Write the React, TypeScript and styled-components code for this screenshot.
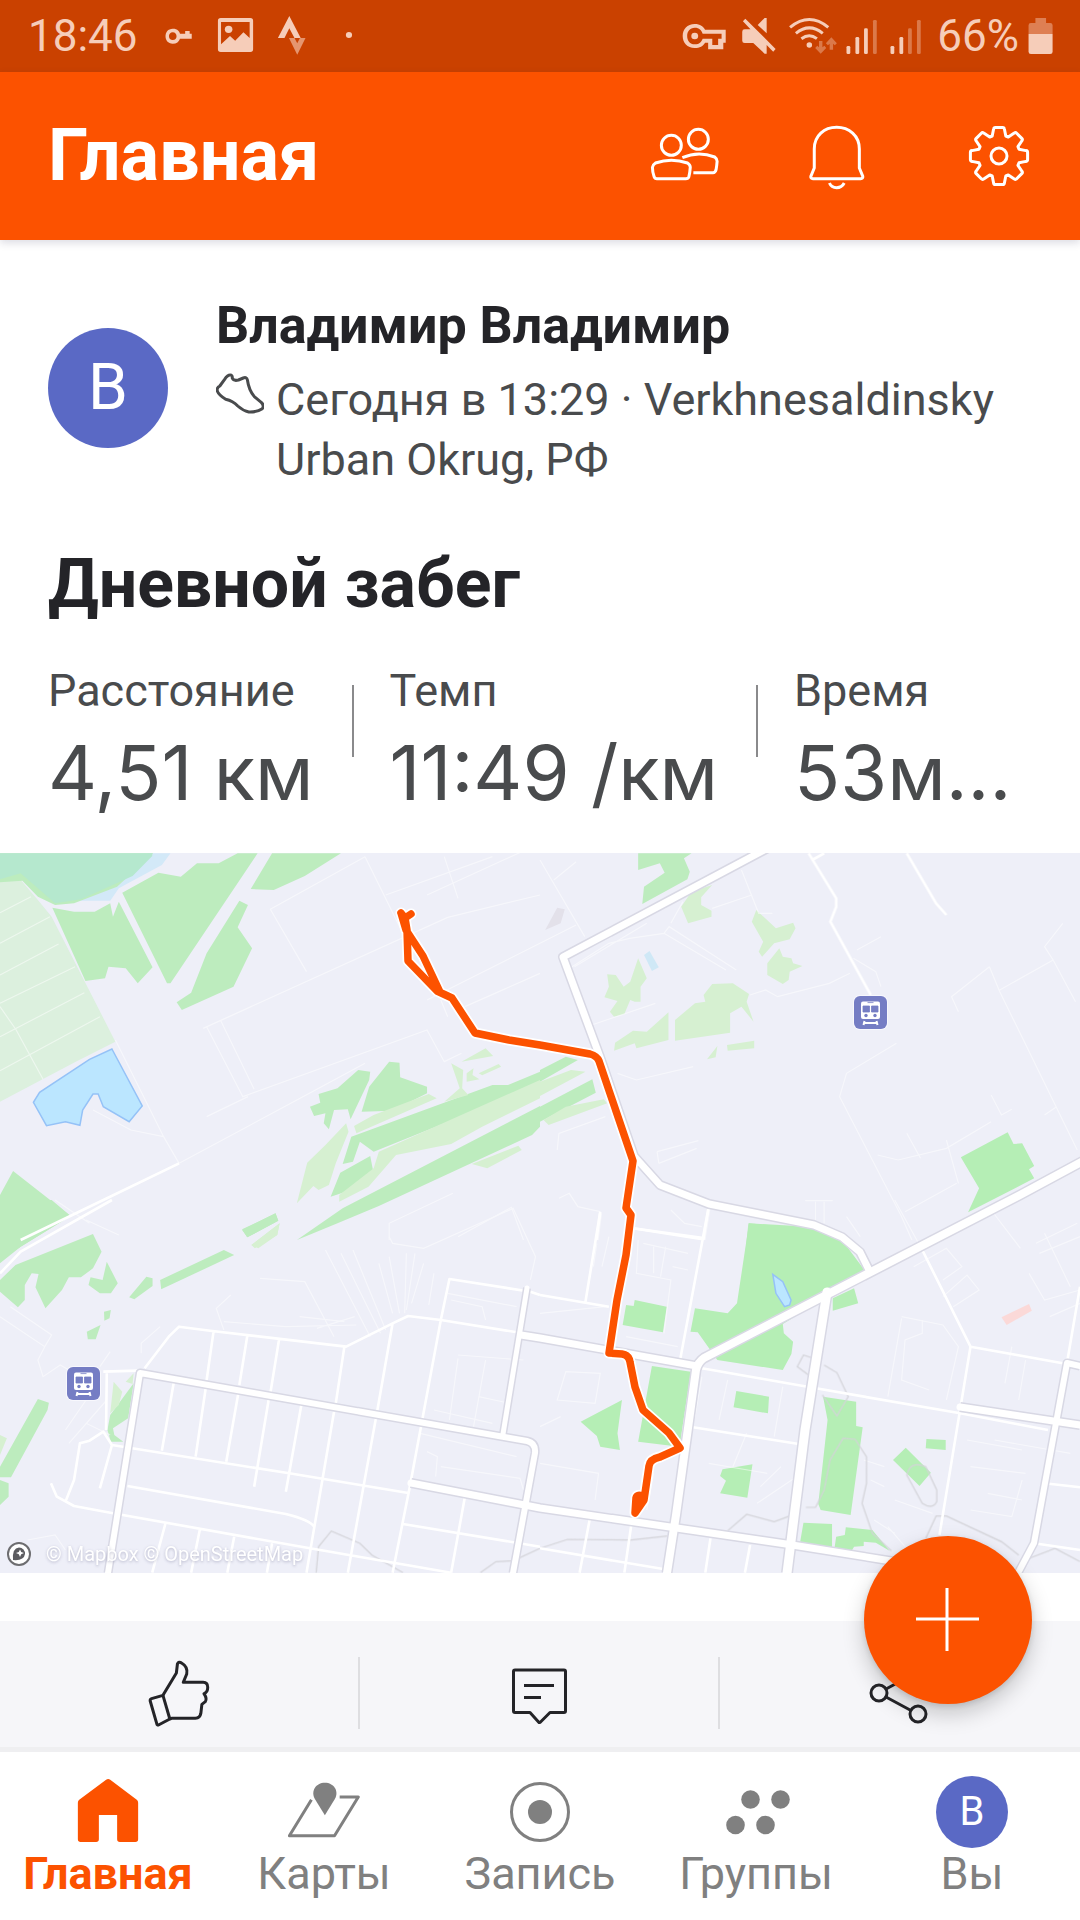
import React from 'react';
import styled, { createGlobalStyle } from 'styled-components';

const color = {
  brand: '#fc5200',
  brandDark: '#ca4100',
  ink: '#242428',
  text: '#494b4d',
  muted: '#808080',
  tint: '#f6cdb9',
  avatar: '#5a69c5',
  surface: '#f6f6f9',
};

const GlobalStyle = createGlobalStyle`
  *, *::before, *::after { box-sizing: border-box; }
  body { margin: 0; background: #fff; font-family: Roboto, "Noto Sans", sans-serif; color: ${color.ink}; }
  svg { display: block; }
  h1, h2, p, dl, dt, dd { margin: 0; }
`;

const Screen = styled.div`
  position: relative;
  display: flex;
  flex-direction: column;
  min-height: 100vh;
  background: #fff;
`;

const StatusBar = styled.div`
  display: flex;
  justify-content: space-between;
  align-items: center;
  height: 72px;
  padding: 0 25px 0 28px;
  background: ${color.brandDark};
  color: ${color.tint};
  font-size: 44px;
  line-height: 72px;
`;

const StatusGroup = styled.div`
  display: flex;
  align-items: center;
`;

const Clock = styled.time`
  padding-right: 2px;
`;

const BatteryLevel = styled.span`
  padding: 0 2px 0 8px;
`;

const Header = styled.header`
  position: relative;
  display: flex;
  justify-content: space-between;
  align-items: center;
  height: 168px;
  padding: 0 33px 0 48px;
  background: ${color.brand};
  color: #fff;
  box-shadow: 0 3px 8px rgba(40, 40, 80, 0.16);
`;

const PageTitle = styled.h1`
  font-size: 72px;
  line-height: 84px;
  font-weight: 700;
`;

const HeaderActions = styled.div`
  display: flex;
  gap: 60px;
`;

const IconButton = styled.button`
  display: flex;
  align-items: center;
  justify-content: center;
  padding: 0;
  border: 0;
  background: none;
  color: inherit;
  cursor: pointer;
`;

const Main = styled.main`
  flex: 1;
  display: flex;
  flex-direction: column;
`;

const Activity = styled.article`
  display: flex;
  flex-direction: column;
`;

const Summary = styled.div`
  display: flex;
  flex-direction: column;
  padding: 56px 48px 36px;
`;

const Athlete = styled.div`
  display: flex;
  align-items: flex-start;
  gap: 48px;
`;

const Avatar = styled.span<{ $size: number; $font: number; $top?: number }>`
  flex: none;
  display: flex;
  align-items: center;
  justify-content: center;
  width: ${(p) => p.$size}px;
  height: ${(p) => p.$size}px;
  margin-top: ${(p) => p.$top ?? 0}px;
  border-radius: 50%;
  background: ${color.avatar};
  color: #fff;
  font-size: ${(p) => p.$font}px;
  line-height: 1;
`;

const AthleteInfo = styled.div`
  flex: 1;
  min-width: 0;
  display: flex;
  flex-direction: column;
  gap: 14px;
`;

const AthleteName = styled.p`
  font-size: 52px;
  line-height: 60px;
  font-weight: 700;
`;

const Meta = styled.div`
  display: flex;
  align-items: flex-start;
  gap: 12px;
  color: ${color.text};
  font-size: 45px;
  line-height: 60px;
`;

const ActivityTitle = styled.h2`
  margin-top: 52px;
  font-size: 68px;
  line-height: 84px;
  font-weight: 700;
`;

const Stats = styled.dl`
  display: flex;
  margin-top: 39px;
  color: ${color.text};
`;

const Stat = styled.div`
  position: relative;
  display: flex;
  flex-direction: column;
  gap: 10px;
  white-space: nowrap;

  & + & {
    margin-left: 38px;
    padding-left: 38px;
  }

  & + &::before {
    content: '';
    position: absolute;
    left: 0;
    top: 20px;
    width: 2px;
    height: 72px;
    background: #8a8a8c;
  }
`;

const StatLabel = styled.dt`
  font-size: 45px;
  line-height: 52px;
`;

const StatValue = styled.dd`
  font-family: Inter, Roboto, sans-serif;
  font-size: 76px;
  line-height: 90px;
`;

const MapFrame = styled.div`
  position: relative;
  background: #eeeff8;

  & > svg {
    width: 100%;
    height: auto;
  }
`;

const Attribution = styled.div`
  position: absolute;
  left: 6px;
  bottom: 6px;
  display: flex;
  align-items: center;
  gap: 14px;
  font-size: 20px;
  line-height: 26px;

  a {
    color: #fff;
    text-decoration: none;
    text-shadow: 0 1px 3px rgba(90, 90, 130, 0.4);
  }
`;

const ActionBar = styled.div`
  display: grid;
  grid-template-columns: repeat(3, 1fr);
  margin-top: 48px;
  padding: 36px 0 18px;
  background: ${color.surface};
  color: ${color.ink};

  & > * + * {
    border-left: 2px solid #dedee1;
    margin-left: -2px;
  }
`;

const Nav = styled.nav`
  display: grid;
  grid-template-columns: repeat(5, 1fr);
  padding: 24px 0 20px;
  border-top: 5px solid #efeff1;
  background: #fff;
`;

const NavLink = styled.a<{ $active?: boolean }>`
  display: flex;
  flex-direction: column;
  align-items: center;
  color: ${(p) => (p.$active ? color.brand : color.muted)};
  font-size: 45px;
  line-height: 52px;
  font-weight: ${(p) => (p.$active ? 700 : 400)};
  text-decoration: none;
`;

const Fab = styled.button`
  position: absolute;
  right: 48px;
  bottom: 216px;
  display: flex;
  align-items: center;
  justify-content: center;
  width: 168px;
  height: 168px;
  padding: 0;
  border: 0;
  border-radius: 50%;
  background: ${color.brand};
  color: #fff;
  box-shadow: 0 10px 22px rgba(0, 0, 0, 0.2), 0 2px 6px rgba(0, 0, 0, 0.12);
  cursor: pointer;
`;

type GlyphProps = {
  w: number;
  h: number;
  box: string;
  stroke?: number;
  children: React.ReactNode;
};

/* Icon canvas: children inherit the current colour; stroke widths stay in screen pixels. */
const GlyphSvg = styled.svg<{ $stroke?: number }>`
  flex: none;

  & * {
    vector-effect: non-scaling-stroke;
    stroke-linejoin: round;
  }

  ${(p) => (p.$stroke ? `stroke: currentColor; stroke-width: ${p.$stroke}px; fill: none;` : 'fill: currentColor;')}
`;

function Glyph({ w, h, box, stroke, children }: GlyphProps) {
  return (
    <GlyphSvg width={w} height={h} viewBox={box} preserveAspectRatio="none" $stroke={stroke} aria-hidden="true">
      {children}
    </GlyphSvg>
  );
}

function gearPath() {
  const pts: string[] = [];
  for (let i = 0; i < 8; i++) {
    const a = (i * Math.PI) / 4;
    const at = (r: number, t: number) =>
      `${(48 + r * Math.sin(a) + t * Math.cos(a)).toFixed(2)} ${(48 - r * Math.cos(a) + t * Math.sin(a)).toFixed(2)}`;
    pts.push(`${i ? 'L' : 'M'}${at(20, -6.8)}L${at(27, -5.4)}Q${at(28.6, -5.2)} ${at(28.6, -3.6)}L${at(28.6, 3.6)}Q${at(28.6, 5.2)} ${at(27, 5.4)}L${at(20, 6.8)}`);
  }
  return pts.join('') + 'Z';
}

/* The map is drawn as four tiles; each tile has its own coordinate grid. */
const tiles = {
  nw: 'translate(0 840) scale(.34439 .33333)',
  ne: 'translate(540 840) scale(.34439 .33333)',
  sw: 'translate(0 1200) scale(.34439 .33333)',
  se: 'translate(540 1200) scale(.34439 .33333)',
};
type TileId = keyof typeof tiles;

const ids = Object.keys(tiles) as TileId[];

const pale: Partial<Record<TileId, string>> = {
  nw: 'M0 120H60L110 180L150 230L335 605L220 665L0 785Z',
};

const lightGreen: Partial<Record<TileId, string>> = {
  nw: 'M1005 850L1012 875L975 970L955 1035L925 1050L910 1038L862 1090L892 968L945 915ZM1028 858L1085 825L1245 762L1268 775L1035 880ZM1100 935L1568 720V775L1400 860L1310 912L1150 945L1070 1040L985 1085V1065L1085 985ZM1310 670L1345 690L1342 745L1360 765L1290 785L1335 745ZM1340 665L1410 625L1432 648ZM1355 700L1375 685L1372 705L1392 718L1355 725ZM1390 700L1448 672L1455 680L1400 706ZM1370 972L1505 917L1515 930L1415 985ZM730 1215L812 1150L805 1185L750 1225Z',
  ne: 'M500 135L468 172V195L498 212V230L430 250L410 200L440 155ZM628 210L685 265L735 248L742 265L725 298L680 310L645 350L635 335L648 305L615 245ZM695 325L705 350L730 355L735 370L762 378L725 395L722 420L705 432L660 405V370ZM285 355L310 415L292 440V485H275L262 480L245 522L215 530L203 515L225 483L187 472L200 440L195 403L220 405L243 440L262 425ZM373 517V600L280 625L275 610L215 632L218 608L270 572L310 575ZM480 485L475 465L500 432L560 430L607 462L600 485L620 545L585 500L552 520V578L392 602V540L450 490ZM515 618L510 652L485 658ZM543 615L622 602V625L545 632ZM0 725L90 690L132 695L0 768ZM10 840L75 800L185 778L195 790L25 855Z',
  sw: 'M730 135L812 70L805 105L740 145ZM330 545L355 575L345 615L320 640ZM365 545L388 520L385 552ZM0 705L20 715L0 765Z',
};

const green: Partial<Record<TileId, string>> = {
  nw: 'M0 40H445L340 140L215 190L160 195L110 170L65 122L0 127ZM355 158L460 98L525 110L572 70H635L690 40H748L495 430H485ZM790 40H990L885 108L795 150L728 147ZM152 203L215 215H275L320 190L328 230L345 185L443 382L400 430L365 385L315 380L305 415L248 423ZM695 182L720 195L690 262L732 325L678 440L528 510L513 487L555 458L600 340ZM925 762L980 745L1040 690L1075 695L1072 720L1018 838L1010 808L970 810L955 868L940 850L945 820L912 828L900 800L930 788ZM1050 815L1072 740L1130 665L1160 668L1162 712L1240 740V760L1140 812ZM1020 890L1430 735H1475L1568 695V735L1085 935L1045 905L1025 965L995 972ZM988 998L1075 948L1083 990L1035 1045L960 1070ZM862 1200L995 1105L1568 798V860L1545 885L1100 1098L980 1150ZM38 993L205 1128L60 1220L0 1260V1150L12 1115L0 1120V1065ZM703 1168L800 1120L808 1142L718 1192Z',
  ne: 'M285 40H440L418 55L435 95L428 118L297 192L302 140L362 98L348 70L285 90ZM0 690L75 650L110 660L0 725ZM0 800L152 718L162 758L0 845ZM605 1150L780 1165L860 1195L935 1300H590Z',
  sw: 'M150 0L205 48L60 140L0 190V0ZM0 240L45 195L270 102L295 155L270 205L235 232H200L180 270L132 325L103 262L112 222L92 220L72 255V300L52 322L0 275ZM310 185L342 250L322 280H290L257 255L263 232L298 240ZM375 292L425 230L443 235V258L390 298ZM465 240L650 150L680 165L468 268ZM302 335L322 330L318 355L303 362ZM252 395L292 375L278 418H255ZM703 90L800 40L808 62L718 112ZM110 597L142 608L138 630L32 832H0V800ZM0 840L25 850V890L0 915ZM388 550L372 655L328 685L332 705L358 725H322L312 690L320 645Z',
};

const park: Partial<Record<TileId, string>> = {
  ne: 'M1222 952L1358 877L1375 912L1400 910L1435 978L1420 988L1435 1015L1243 1117L1275 1045Z',
  se: 'M607 70L785 80L870 110L935 200L955 215L705 372L708 400L735 425L730 462L705 510L515 480L458 397L437 395L450 325L545 340L572 310ZM850 295L912 265L924 310L850 332ZM275 300L368 320L357 397L240 375L250 315L272 318ZM325 498L438 515L405 740L285 725ZM238 600L225 700L232 750L175 740L165 708L118 665ZM570 573L665 590L662 640L562 622ZM530 808L617 793L602 893L523 880L540 842L523 828ZM822 590L918 605V678L937 682L902 945L815 930L808 912L835 660ZM1062 743L1135 818L1102 858L1025 780ZM1122 717L1178 720V750L1120 745ZM765 968L848 972V1042L755 1028ZM888 982L965 990L1015 1052L975 1028L940 1025V1038L912 1040L905 1052L855 1045L860 1010L885 1005Z',
};

const bluish: Partial<Record<TileId, string>> = {
  ne: 'M302 345L318 333L345 382L325 393Z',
};

const lakes: Partial<Record<TileId, string>> = {
  nw: 'M325 627L413 798L375 845L300 800L285 762H270L240 810L232 856L190 845L135 857L97 787L115 757L260 658Z',
  se: 'M676 223L705 245L729 300L725 315L710 320L685 280Z',
};

const faintRoads: Partial<Record<TileId, string>> = {
  nw: 'M0 218L90 170M0 310L145 230M0 405L170 312M0 490L218 380M0 590L245 458M0 692L290 530M0 500L47 570L125 718M1060 50L1165 270M1568 10L1240 165M1060 50L785 208L890 395M600 560L705 770L1240 570L1290 665L1340 640M590 565L1300 232L1568 165M640 540L738 748M1240 480L1568 310M1350 500L1568 400M1290 50L1330 175M1280 480L1300 530M335 600L475 890L520 970M270 810L380 870L475 890M600 830L720 770M520 970L1060 670M1130 1200V1150L1315 1060M1330 1190L1485 1102L1520 1200M1120 165L1430 50',
  ne: 'M0 60L130 290M40 120L105 65M0 310L105 255M70 395L200 310L260 295L360 280L375 260L570 390M380 250L415 185M360 280L540 390M585 90L635 220H675M615 165L500 205M150 555L335 490M100 380L310 250M610 465L655 450L690 470L840 430L900 400M920 330L990 290M910 355L975 395L990 440M225 700L280 720L445 680M340 935L460 902M345 970L455 925M340 935L345 970M1035 610L890 700L870 770L1050 1130L1080 1200M1305 380L1195 470L1215 515M1305 380L1335 455L1560 930M1335 450L1490 360L1465 320L1518 250M1490 360L1555 485M1310 765L1340 825L1370 808M980 945L1040 960L1180 925L1310 845M1065 880L1105 955M1180 900L1215 1030M1465 825L1500 800M50 930L55 880L190 830M55 1075L85 1060L110 1100L175 1115M1060 1115L1210 1030M380 1110L420 1150L470 1160M800 1085V1140M825 1085V1150M770 1082H850',
  sw: 'M650 390L628 325L670 285M755 235L885 245L970 410M650 365L830 380L1035 375M870 350L1000 365M920 385L1030 350M1130 110L1140 130L1230 145L1490 25L1555 170L1540 240M945 150L1075 410M990 160L1105 400M1025 150L1120 390M1100 190L1140 340M1130 170L1160 340M1180 160L1175 340M1205 160L1180 330M1230 190L1195 310M1260 220L1245 315M1300 280L1500 320M1310 300L1400 320L1410 360M1330 475L1305 660M1410 480L1375 680M1330 465L1520 480M1260 630L1430 670M1390 590L1480 610M1280 800L1510 835L1520 870M1240 755L1270 770L1265 830M1220 700L1500 770M30 320L150 405L130 440L0 350M130 440L110 480L125 530L175 495L200 510M320 455L290 500M410 460V430L465 380M200 730L310 600M190 690L250 600M250 670L320 705M80 1020L160 1005L190 1050M250 60L345 105M160 0L260 70',
  se: 'M75 515L50 600L160 610L175 520ZM165 130L155 200M200 110L180 200M285 120L280 220L380 240L360 400M300 130L430 160M330 140V220M365 140L350 230M385 200L430 210M250 410L400 440M470 530L450 650M545 540L520 660M705 560L680 710M600 700L560 800M1050 355L1010 590M1050 350L1170 375L1215 440L1180 600M1110 360V400L1060 420L1050 540L1130 570M1085 200L1180 145L1225 200L1170 240M1170 290L1240 225L1275 270L1200 320M1310 30L1395 145M1420 220L1465 300L1568 270M1465 100L1540 260M1440 130L1560 70M1450 160L1568 110M1480 350L1568 310M1370 440L1350 550M1410 480L1390 600M1240 720L1400 750M1250 800L1410 820M1300 880L1400 900M1320 720L1540 760M0 790L170 820L160 900M330 820L310 930M940 780L1000 800M960 840L1000 860M970 960L1030 1000M1030 900L1140 940M1250 930L1370 950L1400 840M1010 980L1060 1040M0 680L60 650M0 340L190 320M640 860L700 800M490 790L660 820M630 910L745 830M890 50L930 110M1030 0L1110 150',
};

const localRoads: Partial<Record<TileId, string>> = {
  nw: 'M520 970L240 1110L60 1200',
  ne: 'M780 40L860 175V200L843 245L960 465M1065 40L1150 190L1180 225M790 60L825 40M175 1120L165 1200M490 1105L475 1200M270 1165L480 1195',
  sw: 'M325 0L60 155L0 220M420 505L490 410L520 380L610 392L1005 440L1140 370L1185 348L1280 360L1520 400M1540 275L1305 237L1280 360L1190 860L1140 1118M620 395L600 540M718 408L695 555M810 420L785 580M1000 440L975 610M1140 370L1095 635L1010 1118M505 545L470 752M598 560L568 770M692 580L657 785M780 600L738 860M875 615L830 875M970 635L890 1118M325 735L840 820L1190 880M370 858L830 942Q900 960 912 980M148 850L165 890L215 918L340 942L900 1045L1310 1118M190 905L215 840L232 730L260 722L300 695L325 735L290 865M300 515L400 512M310 520L308 690M480 972L442 1118M580 990L555 1118M680 1010L660 1118M790 1030L775 1118M1350 890L1310 1118M1170 972L1568 1040M1540 275L1568 285',
  se: 'M175 35L132 305M490 20L405 490M270 85L472 118M0 285L200 320M470 505L785 562L1220 640L1475 690M435 680L770 735M1110 150L1250 440L1530 492M1250 440L1160 1005M1568 260L1530 490M145 955L115 1118M265 975L245 1118M495 1015L480 1118M610 1035L595 1118M0 1045L375 1110M1435 1030L1568 1050M1465 850L1568 862',
};

const railLines: Partial<Record<TileId, string>> = {
  sw: 'M918 1118L925 1040L962 993L1045 1030L1080 1065L1170 1118M1395 1118L1440 1085L1490 1082L1568 1045',
  se: 'M0 1045L80 1018L265 1020L370 1008M545 992L600 943L680 965L725 948M825 495L862 518L895 590L862 648L820 585M780 525L747 500L765 465L795 475M772 922H800L825 870L842 780L880 715L915 718L948 770V850L935 910L965 1000L1020 1052M1120 1015L1150 948H1180L1340 1025L1390 1065M1420 1075L1495 1045L1568 1085M1065 825Q1075 780 1120 800L1152 870V905Q1140 930 1110 910Z',
};

const mainRoads: [string, number][] = [
  ['M527 1288L503 1434', 5],
  ['M521 1335L540 1338L697 1366', 7],
  ['M108 1573L140 1373L527 1441Q536 1443 535 1453L513 1573', 6],
  ['M411 1483L540 1508L786 1544L960 1572', 7],
  ['M1080 1366L1067 1363L1034 1543L1018 1573', 6],
  ['M960 1407L1080 1425', 7],
  ['M768 848L563 957L600 1057L634 1156L660 1185L709 1204L814 1225L842 1237L860 1252L869 1270', 7],
  ['M1085 1160L1020 1195L704 1358Q698 1362 696 1370L676 1515L667 1573', 8],
  ['M827 1292L805 1430L787 1573', 9],
];

const route =
  'M401 913L405 918L411 914M405 918L407 930L408 961L437 991L452 998L475 1033L509 1040L540 1045L590 1054Q597 1056 599 1061L633 1161L626 1208L631 1215L626 1255L617 1300L609 1353L622 1354Q629 1355 630 1362L635 1387L643 1410L669 1433L680 1448L660 1457Q650 1459 649 1466L644 1500L635 1513L636 1498Q637 1494 642 1496M401 913L406 930L423 956L440 992';

function Layer({ data, ...paint }: { data: Partial<Record<TileId, string>> } & React.SVGProps<SVGGElement>) {
  return (
    <g {...paint}>
      {ids.map((id) => data[id] && <path key={id} d={data[id]} transform={tiles[id]} vectorEffect="non-scaling-stroke" />)}
    </g>
  );
}

function Station({ x, y }: { x: number; y: number }) {
  return (
    <g transform={`translate(${x} ${y})`}>
      <rect x="-1" y="-1" width="35" height="35" rx="7" fill="#f8f8fd" />
      <rect width="33" height="33" rx="6" fill="#757dc4" />
      <rect x="7" y="5.500" width="19" height="17.500" rx="2" fill="#fff" />
      <path d="M13.500 6.600h6M9 10h6.500v6H9zM17.500 10H24v6h-6.500z" fill="#757dc4" stroke="#757dc4" strokeWidth=".8" />
      <circle cx="12" cy="19.500" r="1.700" fill="#757dc4" />
      <circle cx="21" cy="19.500" r="1.700" fill="#757dc4" />
      <path d="M10.500 25L9.500 29M22.500 25L23.500 29M10 27h13" stroke="#fff" strokeWidth="2" fill="none" />
    </g>
  );
}

function RouteMap() {
  return (
    <svg viewBox="0 853 1080 720" role="img" aria-label="Маршрут пробежки на карте">
      <rect y="853" width="1080" height="720" fill="#eeeff8" />
      <Layer data={{ nw: 'M430 40H495L470 75L345 145L320 182L215 182Z' }} fill="#d3e9f8" />
      <Layer data={pale} fill="#dcf0de" />
      <Layer data={green} fill="#bdecbe" />
      <Layer data={{ nw: 'M0 40H442V48L385 108L235 178L160 190L60 100L0 118Z' }} fill="#b5e8ce" />
      <Layer data={lightGreen} fill="#d6f0d1" />
      <Layer data={park} fill="#b5eeb5" />
      <Layer data={bluish} fill="#cfe8f6" />
      <Layer data={{ ne: 'M50 203L72 208L60 250L15 270Z' }} fill="#e3e1ea" />
      <Layer data={{ se: 'M1340 352L1420 312L1428 332L1355 375Z' }} fill="#fbd9d8" />
      <Layer data={lakes} fill="#bbe6ff" stroke="#95c2f7" strokeWidth="1.500" />
      <Layer data={faintRoads} fill="none" stroke="#fff" strokeWidth="1.200" opacity=".5" />
      <Layer data={railLines} fill="none" stroke="#d3d3d8" strokeWidth="1.200" />
      <Layer data={localRoads} fill="none" stroke="#fff" strokeWidth="2.600" strokeLinejoin="round" />
      <g fill="none" stroke="#d8d8e4" strokeLinejoin="round">
        {mainRoads.map(([d, w]) => (
          <path key={d} d={d} strokeWidth={w + 3} />
        ))}
      </g>
      <g fill="none" stroke="#fff" strokeLinejoin="round" strokeLinecap="round">
        {mainRoads.map(([d, w]) => (
          <path key={d} d={d} strokeWidth={w} />
        ))}
      </g>
      <Station x={854} y={996} />
      <Station x={67} y={1367} />
      <g fill="none" strokeLinejoin="round" strokeLinecap="round">
        <path d={route} stroke="#fff" strokeWidth="11" />
        <path d={route} stroke={color.brand} strokeWidth="7.500" />
      </g>
    </svg>
  );
}

function PeopleIcon() {
  return (
    <Glyph w={96} h={96} box="285 324 279 288" stroke={3}>
      <ellipse cx="379" cy="436" rx="29" ry="30" />
      <ellipse cx="457.500" cy="418" rx="29" ry="30" />
      <path d="M337 536Q331 536 329 530Q324 516 324 502Q325 494 333 489Q379 472 426 489Q434 494 434 502Q433 518 430 530Q428 536 421 536Z" />
      <path d="M411 473Q457 452 505 471Q512 476 512 484Q511 498 509 509Q507 518 500 518H443" />
    </Glyph>
  );
}

function BellIcon() {
  return (
    <Glyph w={96} h={96} box="741 324 279 288" stroke={3}>
      <path d="M797 447C797 407 826 382 862 382S928 407 928 447V504L938 529Q939 536 932 536H793Q786 536 787 529L797 504Z" />
      <path d="M841 549Q847 563 862 563T884 549" />
    </Glyph>
  );
}

function GearIcon() {
  return (
    <Glyph w={96} h={96} box="0 0 96 96" stroke={3}>
      <path d={gearPath()} />
      <circle cx="48" cy="48" r="8" />
    </Glyph>
  );
}

function ShoeIcon() {
  return (
    <Glyph w={48} h={60} box="627 270 139 180" stroke={3}>
      <path d="M652 298Q660 285 668 285Q675 285 674 294Q678 304 692 300L706 294Q716 290 718 300Q722 330 738 350L758 367Q768 377 761 386Q745 397 722 396Q705 392 690 378Q676 363 655 358Q632 343 630 330Q630 322 638 318Z" />
    </Glyph>
  );
}

function ThumbIcon() {
  return (
    <Glyph w={72} h={72} box="418 171 209 216" stroke={3}>
      <path d="M473 286L512 219L515 192Q519 183 527 189Q546 200 542 222L532 247H590Q603 247 603 262Q603 278 592 281Q602 296 596 305L586 313L583 340Q581 354 567 355H498L493 357L460 375Q456 376 455 371L436 303Q435 298 440 296Z" />
      <path d="M473 286L493 357" />
    </Glyph>
  );
}

function CommentIcon() {
  return (
    <Glyph w={72} h={72} box="0 0 72 72" stroke={3}>
      <path d="M11 13H60Q61.500 13 61.500 14.500V54Q61.500 55.500 60 55.500H46L36 65.500H35L26 55.500H11Q9.500 55.500 9.500 54V14.500Q9.500 13 11 13Z" />
      <path d="M20 28.500H50M20 40.500H37" />
    </Glyph>
  );
}

function ShareIcon() {
  return (
    <Glyph w={72} h={72} box="0 0 72 72" stroke={3}>
      <circle cx="15" cy="36" r="8" />
      <circle cx="54" cy="57" r="8" />
      <circle cx="54" cy="15" r="8" />
      <path d="M22 40L47 53.500M22 32L47 18.500" />
    </Glyph>
  );
}

function SignalIcon({ bars }: { bars: number }) {
  return (
    <Glyph w={44} h={36} box="872 51 128 108">
      {[
        [888, 135],
        [914, 108],
        [939, 82],
        [965, 57],
      ].map(([x, y], i) => (
        <rect key={x} x={x} y={y} width="11" height={159 - y} rx="4" opacity={i < bars ? 1 : 0.4} />
      ))}
    </Glyph>
  );
}

export default function App() {
  return (
    <>
      <GlobalStyle />
      <Screen>
        <StatusBar>
          <StatusGroup>
            <Clock>18:46</Clock>
            <Glyph w={220} h={42} box="410 45 638 126">
              <path fillRule="evenodd" d="M505 86C520 86 524 94 526 101H541V93H554V101H560V116H526C523 125 516 131 505 131C491 131 484 121 484 109S491 86 505 86ZM505 97C498 97 494 102 494 109S498 120 505 120S516 116 516 109S512 97 505 97Z" />
              <path fillRule="evenodd" d="M644 54H730Q738 54 738 62V148Q738 156 730 156H644Q636 156 636 148V62Q636 54 644 54ZM645 66V133L671 108L686 122L710 97L728 114V66Z" />
              <ellipse cx="667" cy="88" rx="11" ry="11" />
              <path d="M843 48L876 114H858L843 85L829 114H810Z" />
              <path opacity=".6" d="M842 114H858L866 130L874 114H890L866 164Z" />
              <ellipse cx="1016" cy="105" rx="9" ry="9" />
            </Glyph>
          </StatusGroup>
          <StatusGroup>
            <Glyph w={159} h={42} box="410 42 462 126">
              <path fillRule="evenodd" d="M447 69C463 69 472 77 477 86H537V125H530V145H486V125H477C471 135 462 141 447 141C425 141 412 125 412 105S425 69 447 69ZM447 80C433 80 425 91 425 105S433 130 447 130C461 130 466 123 470 113H498V132H515V113H525V98H470C466 87 461 80 447 80Z" />
              <ellipse cx="447" cy="105" rx="10" ry="10" />
              <path d="M594 53L682 144L675 152L656 132V158H650L617 126H592Q585 126 585 119V92Q585 85 592 85H609L587 61ZM650 51H656V97L630 72Z" />
              <path d="M724 79Q780 32 835 79M741 97Q780 64 819 97M757 113Q780 96 802 113" fill="none" stroke="currentColor" strokeWidth="3" />
              <ellipse cx="780" cy="132" rx="8" ry="8" />
              <path opacity=".4" d="M808 120H818V139L824 134L829 141L813 158L797 141L803 134L808 139ZM844 109L860 127L854 133L849 128V146H839V128L834 133L828 127Z" />
            </Glyph>
            <SignalIcon bars={3} />
            <SignalIcon bars={2} />
            <BatteryLevel>66%</BatteryLevel>
            <Glyph w={34} h={36} box="1395 51 99 108">
              <path opacity=".45" d="M1437 51H1468V66H1480Q1487 66 1487 73V99H1417V73Q1417 66 1424 66H1437Z" />
              <path d="M1417 99H1487V152Q1487 159 1480 159H1424Q1417 159 1417 152Z" />
            </Glyph>
          </StatusGroup>
        </StatusBar>

        <Header>
          <PageTitle>Главная</PageTitle>
          <HeaderActions>
            <IconButton type="button" aria-label="Друзья">
              <PeopleIcon />
            </IconButton>
            <IconButton type="button" aria-label="Уведомления">
              <BellIcon />
            </IconButton>
            <IconButton type="button" aria-label="Настройки">
              <GearIcon />
            </IconButton>
          </HeaderActions>
        </Header>

        <Main>
          <Activity>
            <Summary>
              <Athlete>
                <Avatar $size={120} $font={64} $top={32}>В</Avatar>
                <AthleteInfo>
                  <AthleteName>Владимир Владимир</AthleteName>
                  <Meta>
                    <ShoeIcon />
                    <p>Сегодня в 13:29 · Verkhnesaldinsky Urban Okrug, РФ</p>
                  </Meta>
                </AthleteInfo>
              </Athlete>
              <ActivityTitle>Дневной забег</ActivityTitle>
              <Stats>
                <Stat>
                  <StatLabel>Расстояние</StatLabel>
                  <StatValue>4,51 км</StatValue>
                </Stat>
                <Stat>
                  <StatLabel>Темп</StatLabel>
                  <StatValue>11:49 /км</StatValue>
                </Stat>
                <Stat>
                  <StatLabel>Время</StatLabel>
                  <StatValue>53м...</StatValue>
                </Stat>
              </Stats>
            </Summary>

            <MapFrame>
              <RouteMap />
              <Attribution>
                <Glyph w={26} h={26} box="0 0 26 26">
                  <circle cx="13" cy="13" r="11" fill="#fff" stroke="#6d6d70" strokeWidth="2" />
                  <path d="M7 19Q6 7 13 6.500A6 6 0 0 1 19 13Q18 20 7 19Z" fill="#5c5c60" />
                  <path d="M14 8.500L15.200 11L18 12L15.200 13.200L14 16L12.800 13.200L10 12L12.800 11Z" fill="#fff" />
                </Glyph>
                <a href="#map-credits">© Mapbox © OpenStreetMap</a>
              </Attribution>
            </MapFrame>

            <ActionBar>
              <IconButton type="button" aria-label="Нравится">
                <ThumbIcon />
              </IconButton>
              <IconButton type="button" aria-label="Комментировать">
                <CommentIcon />
              </IconButton>
              <IconButton type="button" aria-label="Поделиться">
                <ShareIcon />
              </IconButton>
            </ActionBar>
          </Activity>
        </Main>

        <Nav aria-label="Основная навигация">
          <NavLink href="#home" $active aria-current="page">
            <Glyph w={72} h={72} box="209 528 209 216">
              <path d="M308 539Q314 535 320 539L397 599Q401 602 401 608V718Q401 726 393 726H348Q340 726 340 718V645H287V718Q287 726 279 726H234Q226 726 226 718V608Q226 602 230 599Z" />
            </Glyph>
            Главная
          </NavLink>
          <NavLink href="#maps">
            <Glyph w={72} h={72} box="836 528 209 216">
              <path d="M943 646L914 597C901 573 917 548 943 548S985 573 972 597Z" />
              <path d="M904 599L840 707H971L1040 591H986" fill="none" stroke="currentColor" strokeWidth="3" />
            </Glyph>
            Карты
          </NavLink>
          <NavLink href="#record">
            <Glyph w={72} h={72} box="0 0 72 72">
              <circle cx="36" cy="36" r="28.500" fill="none" stroke="currentColor" strokeWidth="3" />
              <circle cx="36" cy="36" r="12" />
            </Glyph>
            Запись
          </NavLink>
          <NavLink href="#groups">
            <Glyph w={72} h={72} box="0 0 72 72">
              <circle cx="30.500" cy="23.500" r="9.300" />
              <circle cx="60.500" cy="23.500" r="9.300" />
              <circle cx="15.500" cy="49" r="9.300" />
              <circle cx="45.500" cy="49" r="9.300" />
            </Glyph>
            Группы
          </NavLink>
          <NavLink href="#profile">
            <Avatar $size={72} $font={40}>В</Avatar>
            Вы
          </NavLink>
        </Nav>

        <Fab type="button" aria-label="Добавить">
          <Glyph w={64} h={64} box="0 0 64 64" stroke={3}>
            <path d="M31 -1V63M-1 31H63" />
          </Glyph>
        </Fab>
      </Screen>
    </>
  );
}
